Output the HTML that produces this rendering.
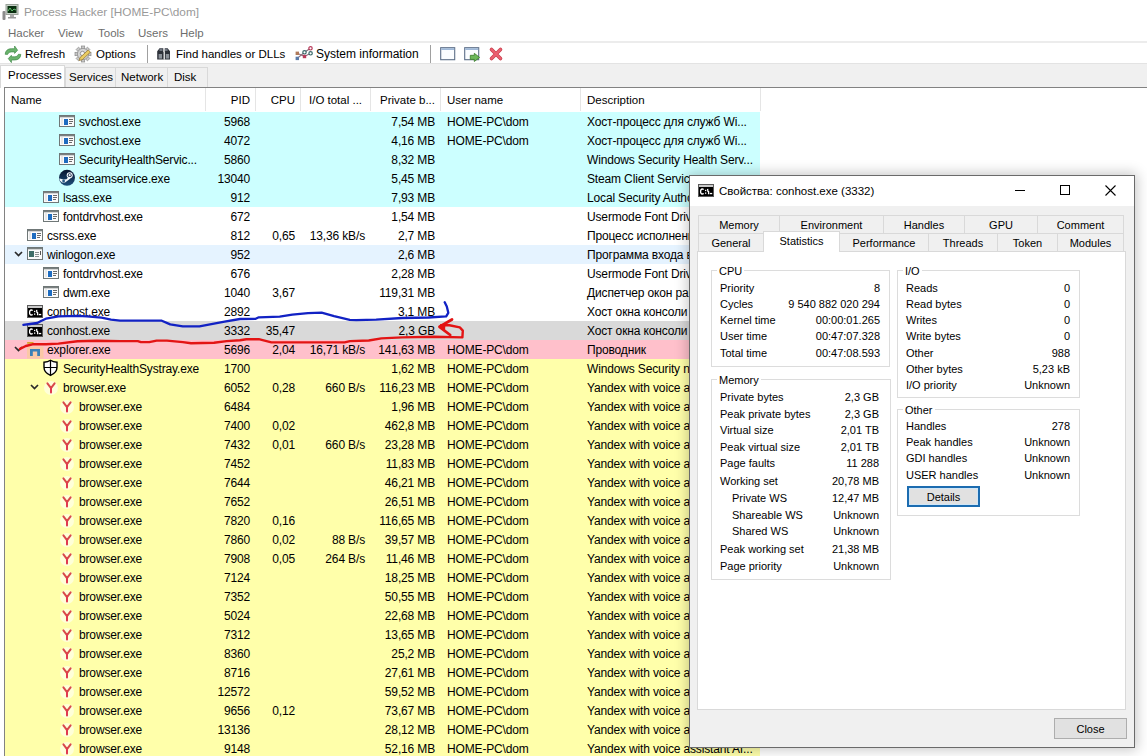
<!DOCTYPE html>
<html><head><meta charset="utf-8"><style>
*{box-sizing:border-box}
html,body{margin:0;padding:0}
body{width:1147px;height:756px;overflow:hidden;position:relative;background:#fff;font-family:"Liberation Sans",sans-serif;font-size:11.5px;color:#000}
.a{position:absolute;white-space:nowrap}
.r{position:absolute;left:5px;width:755px;height:19px}
.t{position:absolute;top:3px;white-space:nowrap;line-height:15px;font-size:12px;letter-spacing:-0.15px}
.rt{text-align:right}
.ic{position:absolute;top:0px;width:17px;height:19px;line-height:0}
.hd{position:absolute;top:88px;height:24px;line-height:24px;white-space:nowrap}
.hdv{position:absolute;top:88px;width:1px;height:23px;background:#e5e5e5}
.dl{position:absolute;white-space:nowrap;font-size:11px;line-height:14px}
</style></head><body>

<svg class="a" style="left:1px;top:3px" width="20" height="17" viewBox="0 0 20 17"><rect x="5" y="1.5" width="12" height="10" fill="#c8d0c8" stroke="#9aa39a"/><rect x="6.5" y="3" width="9" height="7" fill="#0a3010"/><path d="M7 8 L9 5 L11 8 L13 6 L15 7" fill="none" stroke="#6fd07a" stroke-width="0.9"/><rect x="9" y="12" width="4" height="2" fill="#aaa"/><rect x="7" y="14" width="8" height="1.5" fill="#999"/><rect x="1.5" y="8" width="3" height="9" rx="1" fill="#8c8c8c"/></svg>
<div class="a" style="left:24px;top:5px;font-size:11.8px;line-height:15px;color:#999">Process Hacker [HOME-PC\dom]</div>
<div class="a" style="left:8px;top:26px;line-height:15px;color:#6d6d6d">Hacker</div>
<div class="a" style="left:58px;top:26px;line-height:15px;color:#6d6d6d">View</div>
<div class="a" style="left:98px;top:26px;line-height:15px;color:#6d6d6d">Tools</div>
<div class="a" style="left:138px;top:26px;line-height:15px;color:#6d6d6d">Users</div>
<div class="a" style="left:180px;top:26px;line-height:15px;color:#6d6d6d">Help</div>
<div class="a" style="left:0;top:41px;width:1147px;height:2px;background:#ececec"></div>
<svg class="a" style="left:0;top:42px" width="30" height="22" viewBox="0 0 30 22"><path d="M5.2 12.3 C5.4 8.6 7.8 6.7 11.5 6.7 H14.6 V4 L17.6 8.2 L14.6 11.4 V9.9 H11.5 C9.5 9.9 8.3 10.7 7.6 12.4 Z" fill="#6ab36c" stroke="#3f8a48" stroke-width="0.7" stroke-linejoin="round"/><path d="M20.8 12.4 C20.6 16.1 18.2 18 14.5 18 H11.4 V20.6 L8.3 16.6 L11.4 13.3 V14.8 H14.5 C16.5 14.8 17.7 14 18.4 12.3 Z" fill="#6ab36c" stroke="#3f8a48" stroke-width="0.7" stroke-linejoin="round"/></svg>
<div class="a" style="left:25px;top:47px;line-height:15px">Refresh</div>
<svg class="a" style="left:70px;top:42px" width="30" height="22" viewBox="0 0 30 22"><g transform="translate(13 12)"><rect x="-1.7" y="-8" width="3.4" height="3.6" fill="#c8c8c8" stroke="#8a8a8a" stroke-width="0.7" transform="rotate(0)"/><rect x="-1.7" y="-8" width="3.4" height="3.6" fill="#c8c8c8" stroke="#8a8a8a" stroke-width="0.7" transform="rotate(45)"/><rect x="-1.7" y="-8" width="3.4" height="3.6" fill="#c8c8c8" stroke="#8a8a8a" stroke-width="0.7" transform="rotate(90)"/><rect x="-1.7" y="-8" width="3.4" height="3.6" fill="#c8c8c8" stroke="#8a8a8a" stroke-width="0.7" transform="rotate(135)"/><rect x="-1.7" y="-8" width="3.4" height="3.6" fill="#c8c8c8" stroke="#8a8a8a" stroke-width="0.7" transform="rotate(180)"/><rect x="-1.7" y="-8" width="3.4" height="3.6" fill="#c8c8c8" stroke="#8a8a8a" stroke-width="0.7" transform="rotate(225)"/><rect x="-1.7" y="-8" width="3.4" height="3.6" fill="#c8c8c8" stroke="#8a8a8a" stroke-width="0.7" transform="rotate(270)"/><rect x="-1.7" y="-8" width="3.4" height="3.6" fill="#c8c8c8" stroke="#8a8a8a" stroke-width="0.7" transform="rotate(315)"/><circle r="5.6" fill="#d6d6d6" stroke="#8a8a8a" stroke-width="0.7"/><circle r="2.2" cx="-0.5" cy="-0.5" fill="#f4f4f4" stroke="#777" stroke-width="0.7"/></g><path d="M9 18.4 L10 15.6 L18.2 8 L20.4 10.2 L12.2 17.8 Z" fill="#e9cc62" stroke="#8f6e28" stroke-width="0.7"/></svg>
<div class="a" style="left:96px;top:47px;line-height:15px">Options</div>
<div class="a" style="left:147px;top:45px;width:1px;height:18px;background:#a0a0a0"></div>
<svg class="a" style="left:150px;top:42px" width="30" height="22" viewBox="0 0 30 22"><path d="M7.2 17.6 V9.2 L9.6 6.2 H13.3 V10 H14.2 V17.6 Z" fill="#2c3038"/><path d="M20 17.6 V9.2 L17.6 6.2 H14.7 V10 H13.8 V17.6 Z" fill="#2c3038"/><rect x="13.6" y="10" width="1.2" height="7.6" fill="#fff"/><rect x="8.6" y="12" width="3.4" height="4.6" fill="#8a9098"/><rect x="15.8" y="12" width="3.4" height="4.6" fill="#8a9098"/><rect x="9.5" y="6.6" width="3" height="2.4" fill="#707680"/><rect x="15" y="6.6" width="2.6" height="2.4" fill="#707680"/></svg>
<div class="a" style="left:176px;top:47px;line-height:15px">Find handles or DLLs</div>
<svg class="a" style="left:294px;top:46px" width="19" height="15" viewBox="0 0 19 15"><path d="M3.3 12.4 L10.5 6.3 L16.5 2.3" fill="none" stroke="#8a6a7a" stroke-width="1.1"/><path d="M3.3 7.3 L10.5 10.5 L16.6 7.3" fill="none" stroke="#8a6a7a" stroke-width="1.1"/><rect x="1.6" y="5.6" width="3.4" height="3.4" fill="#b07a5a"/><rect x="1.6" y="10.7" width="3.4" height="3.4" fill="#5a7aa8"/><rect x="8.8" y="8.8" width="3.4" height="3.4" fill="#b83a5a"/><circle cx="10.5" cy="6.3" r="1.7" fill="#fff" stroke="#3a6a6a" stroke-width="1.2"/><circle cx="16.6" cy="7.3" r="1.7" fill="#fff" stroke="#3a6a6a" stroke-width="1.2"/><circle cx="16.5" cy="2.3" r="1.7" fill="#fff" stroke="#b83a5a" stroke-width="1.2"/></svg>
<div class="a" style="left:316px;top:47px;line-height:15px;font-size:12px">System information</div>
<div class="a" style="left:430px;top:45px;width:1px;height:18px;background:#a0a0a0"></div>
<svg class="a" style="left:440px;top:47px" width="16" height="14" viewBox="0 0 16 14"><rect x="0.7" y="0.7" width="14" height="12" fill="#fbfdff" stroke="#5d6f88" stroke-width="1.1"/><rect x="1.2" y="1.2" width="13" height="1.8" fill="#9fb8d8"/></svg>
<svg class="a" style="left:464px;top:47px" width="17" height="16" viewBox="0 0 17 16"><rect x="0.7" y="0.7" width="14" height="12" fill="#fbfdff" stroke="#5d6f88" stroke-width="1.1"/><rect x="1.2" y="1.2" width="13" height="1.8" fill="#9fb8d8"/><path d="M6.3 8.3 H10.3 V6.3 L15.6 10.4 L10.3 14.5 V12.4 H6.3 Z" fill="#6cb85a" stroke="#3a7a2a" stroke-width="0.8"/></svg>
<svg class="a" style="left:488px;top:46px" width="16" height="16" viewBox="0 0 16 16"><path d="M3.5 3.5 L12.5 12.5 M12.5 3.5 L3.5 12.5" stroke="#c8404e" stroke-width="3.6" stroke-linecap="round"/><path d="M3.5 3.5 L12.5 12.5 M12.5 3.5 L3.5 12.5" stroke="#ec6070" stroke-width="2.2" stroke-linecap="round"/></svg>
<div class="a" style="left:0;top:63px;width:1147px;height:1px;background:#e3e3e3"></div>
<div class="a" style="left:0;top:64px;width:1147px;height:23px;background:#f0f0f0"></div>
<div class="a" style="left:65px;top:67px;width:143px;height:20px;background:#f0f0f0;border:1px solid #d9d9d9;border-bottom:none"></div>
<div class="a" style="left:115px;top:67px;width:1px;height:20px;background:#d9d9d9"></div>
<div class="a" style="left:167px;top:67px;width:1px;height:20px;background:#d9d9d9"></div>
<div class="a" style="left:0px;top:65px;width:65px;height:23px;background:#fff;border:1px solid #d9d9d9;border-bottom:none"></div>
<div class="a" style="left:8px;top:68px;line-height:15px">Processes</div>
<div class="a" style="left:69px;top:70px;line-height:15px">Services</div>
<div class="a" style="left:121px;top:70px;line-height:15px">Network</div>
<div class="a" style="left:174px;top:70px;line-height:15px">Disk</div>
<div class="a" style="left:4px;top:87px;width:1143px;height:669px;background:#fff;border-top:1px solid #828282;border-left:1px solid #828282"></div>
<div class="hdv" style="left:205px"></div>
<div class="hdv" style="left:255px"></div>
<div class="hdv" style="left:300px"></div>
<div class="hdv" style="left:370px"></div>
<div class="hdv" style="left:440px"></div>
<div class="hdv" style="left:580px"></div>
<div class="hdv" style="left:760px"></div>
<div class="hd" style="left:11px">Name</div>
<div class="hd rt" style="left:205px;width:45px">PID</div>
<div class="hd rt" style="left:255px;width:40px">CPU</div>
<div class="hd" style="left:309px">I/O total ...</div>
<div class="hd" style="left:380px">Private b...</div>
<div class="hd" style="left:447px">User name</div>
<div class="hd" style="left:587px">Description</div>
<div class="r" style="top:112px;background:#ccffff"><div class="ic" style="left:54px"><svg width="16" height="16" viewBox="0 0 16 16"><rect x="0.5" y="3.5" width="15" height="11" fill="#fbfbfb" stroke="#6f7777"/><rect x="1" y="4" width="14" height="1.3" fill="#7a8080"/><rect x="2" y="6" width="2" height="7" fill="#e8e8e8"/><rect x="5" y="7" width="4" height="6" fill="#1e6cc0"/><rect x="10" y="7" width="4" height="1" fill="#6a6a6a"/><rect x="10" y="9" width="4" height="1" fill="#6a6a6a"/><rect x="10" y="11" width="3" height="1" fill="#6a6a6a"/></svg></div><div class="t" style="left:74px">svchost.exe</div><div class="t rt" style="left:0;width:245px">5968</div><div class="t rt" style="left:0;width:430px">7,54 MB</div><div class="t" style="left:442px">HOME-PC\dom</div><div class="t" style="left:582px">Хост-процесс для служб Wi...</div></div>
<div class="r" style="top:131px;background:#ccffff"><div class="ic" style="left:54px"><svg width="16" height="16" viewBox="0 0 16 16"><rect x="0.5" y="3.5" width="15" height="11" fill="#fbfbfb" stroke="#6f7777"/><rect x="1" y="4" width="14" height="1.3" fill="#7a8080"/><rect x="2" y="6" width="2" height="7" fill="#e8e8e8"/><rect x="5" y="7" width="4" height="6" fill="#1e6cc0"/><rect x="10" y="7" width="4" height="1" fill="#6a6a6a"/><rect x="10" y="9" width="4" height="1" fill="#6a6a6a"/><rect x="10" y="11" width="3" height="1" fill="#6a6a6a"/></svg></div><div class="t" style="left:74px">svchost.exe</div><div class="t rt" style="left:0;width:245px">4072</div><div class="t rt" style="left:0;width:430px">4,16 MB</div><div class="t" style="left:442px">HOME-PC\dom</div><div class="t" style="left:582px">Хост-процесс для служб Wi...</div></div>
<div class="r" style="top:150px;background:#ccffff"><div class="ic" style="left:54px"><svg width="16" height="16" viewBox="0 0 16 16"><rect x="0.5" y="3.5" width="15" height="11" fill="#fbfbfb" stroke="#6f7777"/><rect x="1" y="4" width="14" height="1.3" fill="#7a8080"/><rect x="2" y="6" width="2" height="7" fill="#e8e8e8"/><rect x="5" y="7" width="4" height="6" fill="#1e6cc0"/><rect x="10" y="7" width="4" height="1" fill="#6a6a6a"/><rect x="10" y="9" width="4" height="1" fill="#6a6a6a"/><rect x="10" y="11" width="3" height="1" fill="#6a6a6a"/></svg></div><div class="t" style="left:74px">SecurityHealthServic...</div><div class="t rt" style="left:0;width:245px">5860</div><div class="t rt" style="left:0;width:430px">8,32 MB</div><div class="t" style="left:582px">Windows Security Health Serv...</div></div>
<div class="r" style="top:169px;background:#ccffff"><div class="ic" style="left:54px"><svg width="16" height="18" viewBox="0 0 16 18"><defs><linearGradient id="stg" x1="0" y1="0" x2="0" y2="1"><stop offset="0" stop-color="#08142e"/><stop offset="1" stop-color="#1d4f7c"/></linearGradient></defs><circle cx="8" cy="8.8" r="8" fill="url(#stg)"/><path d="M0.4 9.6 L4.6 10.6 L7.4 10.2 L9.8 7.8 L11.6 9.2 L8.8 11.6 L6 13.6 L3 13.6 L1 11.8 Z" fill="#f4f8fc"/><circle cx="4.6" cy="11.9" r="1.4" fill="#2a5a85"/><circle cx="10.7" cy="6.2" r="3" fill="#f4f8fc"/><circle cx="10.7" cy="6.2" r="1.9" fill="#1a2a48"/><circle cx="10.7" cy="6.2" r="1.1" fill="#e8eef6"/></svg></div><div class="t" style="left:74px">steamservice.exe</div><div class="t rt" style="left:0;width:245px">13040</div><div class="t rt" style="left:0;width:430px">5,45 MB</div><div class="t" style="left:582px">Steam Client Service</div></div>
<div class="r" style="top:188px;background:#ccffff"><div class="ic" style="left:38px"><svg width="16" height="16" viewBox="0 0 16 16"><rect x="0.5" y="3.5" width="15" height="11" fill="#fbfbfb" stroke="#6f7777"/><rect x="1" y="4" width="14" height="1.3" fill="#7a8080"/><rect x="2" y="6" width="2" height="7" fill="#e8e8e8"/><rect x="5" y="7" width="4" height="6" fill="#1e6cc0"/><rect x="10" y="7" width="4" height="1" fill="#6a6a6a"/><rect x="10" y="9" width="4" height="1" fill="#6a6a6a"/><rect x="10" y="11" width="3" height="1" fill="#6a6a6a"/></svg></div><div class="t" style="left:58px">lsass.exe</div><div class="t rt" style="left:0;width:245px">912</div><div class="t rt" style="left:0;width:430px">7,93 MB</div><div class="t" style="left:582px">Local Security Authority Process</div></div>
<div class="r" style="top:207px;background:#ffffff"><div class="ic" style="left:38px"><svg width="16" height="16" viewBox="0 0 16 16"><rect x="0.5" y="3.5" width="15" height="11" fill="#fbfbfb" stroke="#6f7777"/><rect x="1" y="4" width="14" height="1.3" fill="#7a8080"/><rect x="2" y="6" width="2" height="7" fill="#e8e8e8"/><rect x="5" y="7" width="4" height="6" fill="#1e6cc0"/><rect x="10" y="7" width="4" height="1" fill="#6a6a6a"/><rect x="10" y="9" width="4" height="1" fill="#6a6a6a"/><rect x="10" y="11" width="3" height="1" fill="#6a6a6a"/></svg></div><div class="t" style="left:58px">fontdrvhost.exe</div><div class="t rt" style="left:0;width:245px">672</div><div class="t rt" style="left:0;width:430px">1,54 MB</div><div class="t" style="left:582px">Usermode Font Driver Host</div></div>
<div class="r" style="top:226px;background:#ffffff"><div class="ic" style="left:22px"><svg width="16" height="16" viewBox="0 0 16 16"><rect x="0.5" y="3.5" width="15" height="11" fill="#fbfbfb" stroke="#6f7777"/><rect x="1" y="4" width="14" height="1.3" fill="#7a8080"/><rect x="2" y="6" width="2" height="7" fill="#e8e8e8"/><rect x="5" y="7" width="4" height="6" fill="#1e6cc0"/><rect x="10" y="7" width="4" height="1" fill="#6a6a6a"/><rect x="10" y="9" width="4" height="1" fill="#6a6a6a"/><rect x="10" y="11" width="3" height="1" fill="#6a6a6a"/></svg></div><div class="t" style="left:42px">csrss.exe</div><div class="t rt" style="left:0;width:245px">812</div><div class="t rt" style="left:0;width:290px">0,65</div><div class="t rt" style="left:0;width:360px">13,36 kB/s</div><div class="t rt" style="left:0;width:430px">2,7 MB</div><div class="t" style="left:582px">Процесс исполнения клиент-сервер</div></div>
<div class="r" style="top:245px;background:#e5f3ff"><div class="a" style="left:9px;top:5px;line-height:0"><svg width="10" height="8" viewBox="0 0 10 8"><path d="M1 2 L4.5 5.5 L8 2" fill="none" stroke="#2a2a2a" stroke-width="1.7"/></svg></div><div class="ic" style="left:22px"><svg width="16" height="16" viewBox="0 0 16 16"><rect x="0.5" y="2.5" width="15" height="12" fill="#fbfbfb" stroke="#6f7777"/><rect x="1" y="3" width="14" height="1.3" fill="#7a8080"/><rect x="2" y="6" width="5" height="6" fill="#3f6e68"/><rect x="8" y="7" width="4" height="1" fill="#8a9090"/><rect x="8" y="9" width="4" height="1" fill="#8a9090"/><rect x="8" y="11" width="4" height="1" fill="#8a9090"/><rect x="13" y="6" width="1" height="4" fill="#555"/></svg></div><div class="t" style="left:42px">winlogon.exe</div><div class="t rt" style="left:0;width:245px">952</div><div class="t rt" style="left:0;width:430px">2,6 MB</div><div class="t" style="left:582px">Программа входа в систему</div></div>
<div class="r" style="top:264px;background:#ffffff"><div class="ic" style="left:38px"><svg width="16" height="16" viewBox="0 0 16 16"><rect x="0.5" y="3.5" width="15" height="11" fill="#fbfbfb" stroke="#6f7777"/><rect x="1" y="4" width="14" height="1.3" fill="#7a8080"/><rect x="2" y="6" width="2" height="7" fill="#e8e8e8"/><rect x="5" y="7" width="4" height="6" fill="#1e6cc0"/><rect x="10" y="7" width="4" height="1" fill="#6a6a6a"/><rect x="10" y="9" width="4" height="1" fill="#6a6a6a"/><rect x="10" y="11" width="3" height="1" fill="#6a6a6a"/></svg></div><div class="t" style="left:58px">fontdrvhost.exe</div><div class="t rt" style="left:0;width:245px">676</div><div class="t rt" style="left:0;width:430px">2,28 MB</div><div class="t" style="left:582px">Usermode Font Driver Host</div></div>
<div class="r" style="top:283px;background:#ffffff"><div class="ic" style="left:38px"><svg width="16" height="16" viewBox="0 0 16 16"><rect x="0.5" y="3.5" width="15" height="11" fill="#fbfbfb" stroke="#6f7777"/><rect x="1" y="4" width="14" height="1.3" fill="#7a8080"/><rect x="2" y="6" width="2" height="7" fill="#e8e8e8"/><rect x="5" y="7" width="4" height="6" fill="#1e6cc0"/><rect x="10" y="7" width="4" height="1" fill="#6a6a6a"/><rect x="10" y="9" width="4" height="1" fill="#6a6a6a"/><rect x="10" y="11" width="3" height="1" fill="#6a6a6a"/></svg></div><div class="t" style="left:58px">dwm.exe</div><div class="t rt" style="left:0;width:245px">1040</div><div class="t rt" style="left:0;width:290px">3,67</div><div class="t rt" style="left:0;width:430px">119,31 MB</div><div class="t" style="left:582px">Диспетчер окон рабочего стола</div></div>
<div class="r" style="top:302px;background:#ffffff"><div class="ic" style="left:22px"><svg width="16" height="16" viewBox="0 0 16 16"><g transform="translate(0 3)"><rect x="0.5" y="0.5" width="15" height="12" fill="#000" stroke="#5a5a5a"/><rect x="1" y="1" width="14" height="2" fill="#c9c9c9"/><path d="M5.6 5.6 Q5.2 5 4.2 5 Q2.6 5 2.6 7.5 Q2.6 10 4.2 10 Q5.2 10 5.6 9.4" fill="none" stroke="#fff" stroke-width="1.3"/><rect x="7" y="5.8" width="1.3" height="1.3" fill="#fff"/><rect x="7" y="8.5" width="1.3" height="1.3" fill="#fff"/><path d="M9.6 4.8 L9.9 7.3 L10.6 7.6 V10.2" fill="none" stroke="#fff" stroke-width="1.3"/><rect x="11.8" y="8.9" width="2.4" height="1.3" fill="#fff"/></g></svg></div><div class="t" style="left:42px">conhost.exe</div><div class="t rt" style="left:0;width:245px">2892</div><div class="t rt" style="left:0;width:430px">3,1 MB</div><div class="t" style="left:582px">Хост окна консоли</div></div>
<div class="r" style="top:321px;background:#d9d9d9"><div class="ic" style="left:22px"><svg width="16" height="16" viewBox="0 0 16 16"><g transform="translate(0 3)"><rect x="0.5" y="0.5" width="15" height="12" fill="#000" stroke="#5a5a5a"/><rect x="1" y="1" width="14" height="2" fill="#c9c9c9"/><path d="M5.6 5.6 Q5.2 5 4.2 5 Q2.6 5 2.6 7.5 Q2.6 10 4.2 10 Q5.2 10 5.6 9.4" fill="none" stroke="#fff" stroke-width="1.3"/><rect x="7" y="5.8" width="1.3" height="1.3" fill="#fff"/><rect x="7" y="8.5" width="1.3" height="1.3" fill="#fff"/><path d="M9.6 4.8 L9.9 7.3 L10.6 7.6 V10.2" fill="none" stroke="#fff" stroke-width="1.3"/><rect x="11.8" y="8.9" width="2.4" height="1.3" fill="#fff"/></g></svg></div><div class="t" style="left:42px">conhost.exe</div><div class="t rt" style="left:0;width:245px">3332</div><div class="t rt" style="left:0;width:290px">35,47</div><div class="t rt" style="left:0;width:430px">2,3 GB</div><div class="t" style="left:582px">Хост окна консоли</div></div>
<div class="r" style="top:340px;background:#ffc0cb"><div class="a" style="left:9px;top:5px;line-height:0"><svg width="10" height="8" viewBox="0 0 10 8"><path d="M1 2 L4.5 5.5 L8 2" fill="none" stroke="#2a2a2a" stroke-width="1.7"/></svg></div><div class="ic" style="left:22px"><svg width="17" height="19" viewBox="0 0 17 19"><rect x="0" y="6.5" width="16.5" height="12" fill="#f6d27a" opacity="0.45"/><rect x="0.2" y="2" width="6.3" height="1.8" fill="#d9a428"/><path d="M3 16 V9 H13 V16 H10.2 V11.6 H5.8 V16 Z" fill="#3a80b8"/></svg></div><div class="t" style="left:42px">explorer.exe</div><div class="t rt" style="left:0;width:245px">5696</div><div class="t rt" style="left:0;width:290px">2,04</div><div class="t rt" style="left:0;width:360px">16,71 kB/s</div><div class="t rt" style="left:0;width:430px">141,63 MB</div><div class="t" style="left:442px">HOME-PC\dom</div><div class="t" style="left:582px">Проводник</div></div>
<div class="r" style="top:359px;background:#ffffaa"><div class="ic" style="left:38px"><svg width="16" height="18" viewBox="0 0 16 18"><path d="M7.5 1.3 C5.8 2.5 3.6 3.1 1 3.2 V8.2 C1 11.8 4 14.8 7.5 16.4 C11 14.8 14 11.8 14 8.2 V3.2 C11.4 3.1 9.2 2.5 7.5 1.3 Z" fill="#fcfcfc" stroke="#000" stroke-width="1.4"/><path d="M7.5 1.5 V16.2 M1 8.5 H14" stroke="#000" stroke-width="1.2"/></svg></div><div class="t" style="left:58px">SecurityHealthSystray.exe</div><div class="t rt" style="left:0;width:245px">1700</div><div class="t rt" style="left:0;width:430px">1,62 MB</div><div class="t" style="left:442px">HOME-PC\dom</div><div class="t" style="left:582px">Windows Security notification icon</div></div>
<div class="r" style="top:378px;background:#ffffaa"><div class="a" style="left:25px;top:5px;line-height:0"><svg width="10" height="8" viewBox="0 0 10 8"><path d="M1 2 L4.5 5.5 L8 2" fill="none" stroke="#2a2a2a" stroke-width="1.7"/></svg></div><div class="ic" style="left:38px"><svg width="16" height="18" viewBox="0 0 16 18"><circle cx="8" cy="10" r="7" fill="#fff" opacity="0.55"/><path d="M4.4 5.4 L8 10.2 M11.6 5.4 L8 10.2" fill="none" stroke="#d84a4a" stroke-width="2" stroke-linecap="round"/><path d="M8 10 V14.6" fill="none" stroke="#e03a50" stroke-width="2" stroke-linecap="round"/></svg></div><div class="t" style="left:58px">browser.exe</div><div class="t rt" style="left:0;width:245px">6052</div><div class="t rt" style="left:0;width:290px">0,28</div><div class="t rt" style="left:0;width:360px">660 B/s</div><div class="t rt" style="left:0;width:430px">116,23 MB</div><div class="t" style="left:442px">HOME-PC\dom</div><div class="t" style="left:582px">Yandex with voice assistant AI...</div></div>
<div class="r" style="top:397px;background:#ffffaa"><div class="ic" style="left:54px"><svg width="16" height="18" viewBox="0 0 16 18"><circle cx="8" cy="10" r="7" fill="#fff" opacity="0.55"/><path d="M4.4 5.4 L8 10.2 M11.6 5.4 L8 10.2" fill="none" stroke="#d84a4a" stroke-width="2" stroke-linecap="round"/><path d="M8 10 V14.6" fill="none" stroke="#e03a50" stroke-width="2" stroke-linecap="round"/></svg></div><div class="t" style="left:74px">browser.exe</div><div class="t rt" style="left:0;width:245px">6484</div><div class="t rt" style="left:0;width:430px">1,96 MB</div><div class="t" style="left:442px">HOME-PC\dom</div><div class="t" style="left:582px">Yandex with voice assistant AI...</div></div>
<div class="r" style="top:416px;background:#ffffaa"><div class="ic" style="left:54px"><svg width="16" height="18" viewBox="0 0 16 18"><circle cx="8" cy="10" r="7" fill="#fff" opacity="0.55"/><path d="M4.4 5.4 L8 10.2 M11.6 5.4 L8 10.2" fill="none" stroke="#d84a4a" stroke-width="2" stroke-linecap="round"/><path d="M8 10 V14.6" fill="none" stroke="#e03a50" stroke-width="2" stroke-linecap="round"/></svg></div><div class="t" style="left:74px">browser.exe</div><div class="t rt" style="left:0;width:245px">7400</div><div class="t rt" style="left:0;width:290px">0,02</div><div class="t rt" style="left:0;width:430px">462,8 MB</div><div class="t" style="left:442px">HOME-PC\dom</div><div class="t" style="left:582px">Yandex with voice assistant AI...</div></div>
<div class="r" style="top:435px;background:#ffffaa"><div class="ic" style="left:54px"><svg width="16" height="18" viewBox="0 0 16 18"><circle cx="8" cy="10" r="7" fill="#fff" opacity="0.55"/><path d="M4.4 5.4 L8 10.2 M11.6 5.4 L8 10.2" fill="none" stroke="#d84a4a" stroke-width="2" stroke-linecap="round"/><path d="M8 10 V14.6" fill="none" stroke="#e03a50" stroke-width="2" stroke-linecap="round"/></svg></div><div class="t" style="left:74px">browser.exe</div><div class="t rt" style="left:0;width:245px">7432</div><div class="t rt" style="left:0;width:290px">0,01</div><div class="t rt" style="left:0;width:360px">660 B/s</div><div class="t rt" style="left:0;width:430px">23,28 MB</div><div class="t" style="left:442px">HOME-PC\dom</div><div class="t" style="left:582px">Yandex with voice assistant AI...</div></div>
<div class="r" style="top:454px;background:#ffffaa"><div class="ic" style="left:54px"><svg width="16" height="18" viewBox="0 0 16 18"><circle cx="8" cy="10" r="7" fill="#fff" opacity="0.55"/><path d="M4.4 5.4 L8 10.2 M11.6 5.4 L8 10.2" fill="none" stroke="#d84a4a" stroke-width="2" stroke-linecap="round"/><path d="M8 10 V14.6" fill="none" stroke="#e03a50" stroke-width="2" stroke-linecap="round"/></svg></div><div class="t" style="left:74px">browser.exe</div><div class="t rt" style="left:0;width:245px">7452</div><div class="t rt" style="left:0;width:430px">11,83 MB</div><div class="t" style="left:442px">HOME-PC\dom</div><div class="t" style="left:582px">Yandex with voice assistant AI...</div></div>
<div class="r" style="top:473px;background:#ffffaa"><div class="ic" style="left:54px"><svg width="16" height="18" viewBox="0 0 16 18"><circle cx="8" cy="10" r="7" fill="#fff" opacity="0.55"/><path d="M4.4 5.4 L8 10.2 M11.6 5.4 L8 10.2" fill="none" stroke="#d84a4a" stroke-width="2" stroke-linecap="round"/><path d="M8 10 V14.6" fill="none" stroke="#e03a50" stroke-width="2" stroke-linecap="round"/></svg></div><div class="t" style="left:74px">browser.exe</div><div class="t rt" style="left:0;width:245px">7644</div><div class="t rt" style="left:0;width:430px">46,21 MB</div><div class="t" style="left:442px">HOME-PC\dom</div><div class="t" style="left:582px">Yandex with voice assistant AI...</div></div>
<div class="r" style="top:492px;background:#ffffaa"><div class="ic" style="left:54px"><svg width="16" height="18" viewBox="0 0 16 18"><circle cx="8" cy="10" r="7" fill="#fff" opacity="0.55"/><path d="M4.4 5.4 L8 10.2 M11.6 5.4 L8 10.2" fill="none" stroke="#d84a4a" stroke-width="2" stroke-linecap="round"/><path d="M8 10 V14.6" fill="none" stroke="#e03a50" stroke-width="2" stroke-linecap="round"/></svg></div><div class="t" style="left:74px">browser.exe</div><div class="t rt" style="left:0;width:245px">7652</div><div class="t rt" style="left:0;width:430px">26,51 MB</div><div class="t" style="left:442px">HOME-PC\dom</div><div class="t" style="left:582px">Yandex with voice assistant AI...</div></div>
<div class="r" style="top:511px;background:#ffffaa"><div class="ic" style="left:54px"><svg width="16" height="18" viewBox="0 0 16 18"><circle cx="8" cy="10" r="7" fill="#fff" opacity="0.55"/><path d="M4.4 5.4 L8 10.2 M11.6 5.4 L8 10.2" fill="none" stroke="#d84a4a" stroke-width="2" stroke-linecap="round"/><path d="M8 10 V14.6" fill="none" stroke="#e03a50" stroke-width="2" stroke-linecap="round"/></svg></div><div class="t" style="left:74px">browser.exe</div><div class="t rt" style="left:0;width:245px">7820</div><div class="t rt" style="left:0;width:290px">0,16</div><div class="t rt" style="left:0;width:430px">116,65 MB</div><div class="t" style="left:442px">HOME-PC\dom</div><div class="t" style="left:582px">Yandex with voice assistant AI...</div></div>
<div class="r" style="top:530px;background:#ffffaa"><div class="ic" style="left:54px"><svg width="16" height="18" viewBox="0 0 16 18"><circle cx="8" cy="10" r="7" fill="#fff" opacity="0.55"/><path d="M4.4 5.4 L8 10.2 M11.6 5.4 L8 10.2" fill="none" stroke="#d84a4a" stroke-width="2" stroke-linecap="round"/><path d="M8 10 V14.6" fill="none" stroke="#e03a50" stroke-width="2" stroke-linecap="round"/></svg></div><div class="t" style="left:74px">browser.exe</div><div class="t rt" style="left:0;width:245px">7860</div><div class="t rt" style="left:0;width:290px">0,02</div><div class="t rt" style="left:0;width:360px">88 B/s</div><div class="t rt" style="left:0;width:430px">39,57 MB</div><div class="t" style="left:442px">HOME-PC\dom</div><div class="t" style="left:582px">Yandex with voice assistant AI...</div></div>
<div class="r" style="top:549px;background:#ffffaa"><div class="ic" style="left:54px"><svg width="16" height="18" viewBox="0 0 16 18"><circle cx="8" cy="10" r="7" fill="#fff" opacity="0.55"/><path d="M4.4 5.4 L8 10.2 M11.6 5.4 L8 10.2" fill="none" stroke="#d84a4a" stroke-width="2" stroke-linecap="round"/><path d="M8 10 V14.6" fill="none" stroke="#e03a50" stroke-width="2" stroke-linecap="round"/></svg></div><div class="t" style="left:74px">browser.exe</div><div class="t rt" style="left:0;width:245px">7908</div><div class="t rt" style="left:0;width:290px">0,05</div><div class="t rt" style="left:0;width:360px">264 B/s</div><div class="t rt" style="left:0;width:430px">11,46 MB</div><div class="t" style="left:442px">HOME-PC\dom</div><div class="t" style="left:582px">Yandex with voice assistant AI...</div></div>
<div class="r" style="top:568px;background:#ffffaa"><div class="ic" style="left:54px"><svg width="16" height="18" viewBox="0 0 16 18"><circle cx="8" cy="10" r="7" fill="#fff" opacity="0.55"/><path d="M4.4 5.4 L8 10.2 M11.6 5.4 L8 10.2" fill="none" stroke="#d84a4a" stroke-width="2" stroke-linecap="round"/><path d="M8 10 V14.6" fill="none" stroke="#e03a50" stroke-width="2" stroke-linecap="round"/></svg></div><div class="t" style="left:74px">browser.exe</div><div class="t rt" style="left:0;width:245px">7124</div><div class="t rt" style="left:0;width:430px">18,25 MB</div><div class="t" style="left:442px">HOME-PC\dom</div><div class="t" style="left:582px">Yandex with voice assistant AI...</div></div>
<div class="r" style="top:587px;background:#ffffaa"><div class="ic" style="left:54px"><svg width="16" height="18" viewBox="0 0 16 18"><circle cx="8" cy="10" r="7" fill="#fff" opacity="0.55"/><path d="M4.4 5.4 L8 10.2 M11.6 5.4 L8 10.2" fill="none" stroke="#d84a4a" stroke-width="2" stroke-linecap="round"/><path d="M8 10 V14.6" fill="none" stroke="#e03a50" stroke-width="2" stroke-linecap="round"/></svg></div><div class="t" style="left:74px">browser.exe</div><div class="t rt" style="left:0;width:245px">7352</div><div class="t rt" style="left:0;width:430px">50,55 MB</div><div class="t" style="left:442px">HOME-PC\dom</div><div class="t" style="left:582px">Yandex with voice assistant AI...</div></div>
<div class="r" style="top:606px;background:#ffffaa"><div class="ic" style="left:54px"><svg width="16" height="18" viewBox="0 0 16 18"><circle cx="8" cy="10" r="7" fill="#fff" opacity="0.55"/><path d="M4.4 5.4 L8 10.2 M11.6 5.4 L8 10.2" fill="none" stroke="#d84a4a" stroke-width="2" stroke-linecap="round"/><path d="M8 10 V14.6" fill="none" stroke="#e03a50" stroke-width="2" stroke-linecap="round"/></svg></div><div class="t" style="left:74px">browser.exe</div><div class="t rt" style="left:0;width:245px">5024</div><div class="t rt" style="left:0;width:430px">22,68 MB</div><div class="t" style="left:442px">HOME-PC\dom</div><div class="t" style="left:582px">Yandex with voice assistant AI...</div></div>
<div class="r" style="top:625px;background:#ffffaa"><div class="ic" style="left:54px"><svg width="16" height="18" viewBox="0 0 16 18"><circle cx="8" cy="10" r="7" fill="#fff" opacity="0.55"/><path d="M4.4 5.4 L8 10.2 M11.6 5.4 L8 10.2" fill="none" stroke="#d84a4a" stroke-width="2" stroke-linecap="round"/><path d="M8 10 V14.6" fill="none" stroke="#e03a50" stroke-width="2" stroke-linecap="round"/></svg></div><div class="t" style="left:74px">browser.exe</div><div class="t rt" style="left:0;width:245px">7312</div><div class="t rt" style="left:0;width:430px">13,65 MB</div><div class="t" style="left:442px">HOME-PC\dom</div><div class="t" style="left:582px">Yandex with voice assistant AI...</div></div>
<div class="r" style="top:644px;background:#ffffaa"><div class="ic" style="left:54px"><svg width="16" height="18" viewBox="0 0 16 18"><circle cx="8" cy="10" r="7" fill="#fff" opacity="0.55"/><path d="M4.4 5.4 L8 10.2 M11.6 5.4 L8 10.2" fill="none" stroke="#d84a4a" stroke-width="2" stroke-linecap="round"/><path d="M8 10 V14.6" fill="none" stroke="#e03a50" stroke-width="2" stroke-linecap="round"/></svg></div><div class="t" style="left:74px">browser.exe</div><div class="t rt" style="left:0;width:245px">8360</div><div class="t rt" style="left:0;width:430px">25,2 MB</div><div class="t" style="left:442px">HOME-PC\dom</div><div class="t" style="left:582px">Yandex with voice assistant AI...</div></div>
<div class="r" style="top:663px;background:#ffffaa"><div class="ic" style="left:54px"><svg width="16" height="18" viewBox="0 0 16 18"><circle cx="8" cy="10" r="7" fill="#fff" opacity="0.55"/><path d="M4.4 5.4 L8 10.2 M11.6 5.4 L8 10.2" fill="none" stroke="#d84a4a" stroke-width="2" stroke-linecap="round"/><path d="M8 10 V14.6" fill="none" stroke="#e03a50" stroke-width="2" stroke-linecap="round"/></svg></div><div class="t" style="left:74px">browser.exe</div><div class="t rt" style="left:0;width:245px">8716</div><div class="t rt" style="left:0;width:430px">27,61 MB</div><div class="t" style="left:442px">HOME-PC\dom</div><div class="t" style="left:582px">Yandex with voice assistant AI...</div></div>
<div class="r" style="top:682px;background:#ffffaa"><div class="ic" style="left:54px"><svg width="16" height="18" viewBox="0 0 16 18"><circle cx="8" cy="10" r="7" fill="#fff" opacity="0.55"/><path d="M4.4 5.4 L8 10.2 M11.6 5.4 L8 10.2" fill="none" stroke="#d84a4a" stroke-width="2" stroke-linecap="round"/><path d="M8 10 V14.6" fill="none" stroke="#e03a50" stroke-width="2" stroke-linecap="round"/></svg></div><div class="t" style="left:74px">browser.exe</div><div class="t rt" style="left:0;width:245px">12572</div><div class="t rt" style="left:0;width:430px">59,52 MB</div><div class="t" style="left:442px">HOME-PC\dom</div><div class="t" style="left:582px">Yandex with voice assistant AI...</div></div>
<div class="r" style="top:701px;background:#ffffaa"><div class="ic" style="left:54px"><svg width="16" height="18" viewBox="0 0 16 18"><circle cx="8" cy="10" r="7" fill="#fff" opacity="0.55"/><path d="M4.4 5.4 L8 10.2 M11.6 5.4 L8 10.2" fill="none" stroke="#d84a4a" stroke-width="2" stroke-linecap="round"/><path d="M8 10 V14.6" fill="none" stroke="#e03a50" stroke-width="2" stroke-linecap="round"/></svg></div><div class="t" style="left:74px">browser.exe</div><div class="t rt" style="left:0;width:245px">9656</div><div class="t rt" style="left:0;width:290px">0,12</div><div class="t rt" style="left:0;width:430px">73,67 MB</div><div class="t" style="left:442px">HOME-PC\dom</div><div class="t" style="left:582px">Yandex with voice assistant AI...</div></div>
<div class="r" style="top:720px;background:#ffffaa"><div class="ic" style="left:54px"><svg width="16" height="18" viewBox="0 0 16 18"><circle cx="8" cy="10" r="7" fill="#fff" opacity="0.55"/><path d="M4.4 5.4 L8 10.2 M11.6 5.4 L8 10.2" fill="none" stroke="#d84a4a" stroke-width="2" stroke-linecap="round"/><path d="M8 10 V14.6" fill="none" stroke="#e03a50" stroke-width="2" stroke-linecap="round"/></svg></div><div class="t" style="left:74px">browser.exe</div><div class="t rt" style="left:0;width:245px">13136</div><div class="t rt" style="left:0;width:430px">28,12 MB</div><div class="t" style="left:442px">HOME-PC\dom</div><div class="t" style="left:582px">Yandex with voice assistant AI...</div></div>
<div class="r" style="top:739px;background:#ffffaa"><div class="ic" style="left:54px"><svg width="16" height="18" viewBox="0 0 16 18"><circle cx="8" cy="10" r="7" fill="#fff" opacity="0.55"/><path d="M4.4 5.4 L8 10.2 M11.6 5.4 L8 10.2" fill="none" stroke="#d84a4a" stroke-width="2" stroke-linecap="round"/><path d="M8 10 V14.6" fill="none" stroke="#e03a50" stroke-width="2" stroke-linecap="round"/></svg></div><div class="t" style="left:74px">browser.exe</div><div class="t rt" style="left:0;width:245px">9148</div><div class="t rt" style="left:0;width:430px">52,16 MB</div><div class="t" style="left:442px">HOME-PC\dom</div><div class="t" style="left:582px">Yandex with voice assistant AI...</div></div>
<svg class="a" style="left:0;top:0" width="1147" height="756"><polyline points="23.4,324.9 30.0,324.0 37.3,323.0 41.0,321.0 45.9,318.7 58.4,316.3 77.5,315.8 87.0,316.3 101.5,317.7 111.0,319.7 120.0,320.6 161.8,320.7 170.2,324.4 182.8,326.4 199.5,326.4 224.6,321.7 240.0,319.0 255.7,318.8 258.8,317.3 279.7,316.7 292.3,314.6 308.0,313.1 321.6,312.6 334.1,316.2 349.8,319.8 356.3,320.1 376.2,319.6 402.3,318.0 428.5,317.5 446.2,316.4 448.3,312.8 446.8,306.5 444.7,302.3" fill="none" stroke="#1222c4" stroke-width="2.3" stroke-linecap="round" stroke-linejoin="round"/><polyline points="20.0,348.9 25.8,346.0 32.5,344.3 46.0,344.2 58.4,343.6 77.5,341.2 96.7,340.7 120.0,341.1 137.8,341.1 140.9,342.1 149.3,342.1 156.6,340.6 167.0,340.6 182.8,342.1 191.1,343.2 214.0,342.7 226.7,341.1 240.0,340.2 246.3,339.2 258.8,339.2 271.4,342.4 344.6,342.4 350.0,341.1 368.8,340.5 381.4,338.4 402.3,337.4 433.7,336.8 462.4,337.4 462.8,330.6 459.8,327.4 449.4,325.3 441.0,325.3" fill="none" stroke="#e31414" stroke-width="2.4" stroke-linecap="round" stroke-linejoin="round"/><polyline points="452,319.5 439.5,326.8 450.2,335" fill="none" stroke="#e31414" stroke-width="2.8" stroke-linecap="round" stroke-linejoin="round"/><polygon points="438.6,327 445.5,322.8 445,331.2" fill="#e31414"/></svg>
<div class="a" style="left:689px;top:175px;width:446px;height:573px;box-shadow:0 0 12px 2px rgba(0,0,0,0.22)"></div>
<div class="a" style="left:689px;top:175px;width:446px;height:573px;background:#f0f0f0;border:1px solid #6a6a6a"></div>
<div class="a" style="left:690px;top:176px;width:444px;height:30px;background:#fff"></div>
<svg class="a" style="left:698px;top:184px" width="16" height="13" viewBox="0 0 16 13"><rect x="0.5" y="0.5" width="15" height="12" fill="#000" stroke="#5a5a5a"/><rect x="1" y="1" width="14" height="2" fill="#c9c9c9"/><path d="M5.6 5.6 Q5.2 5 4.2 5 Q2.6 5 2.6 7.5 Q2.6 10 4.2 10 Q5.2 10 5.6 9.4" fill="none" stroke="#fff" stroke-width="1.3"/><rect x="7" y="5.8" width="1.3" height="1.3" fill="#fff"/><rect x="7" y="8.5" width="1.3" height="1.3" fill="#fff"/><path d="M9.6 4.8 L9.9 7.3 L10.6 7.6 V10.2" fill="none" stroke="#fff" stroke-width="1.3"/><rect x="11.8" y="8.9" width="2.4" height="1.3" fill="#fff"/></svg>
<div class="a" style="left:719px;top:184px;font-size:11.5px;line-height:15px">Свойства: conhost.exe (3332)</div>
<div class="a" style="left:1015px;top:190px;width:10px;height:1px;background:#000"></div>
<div class="a" style="left:1060px;top:185px;width:10px;height:10px;border:1px solid #000"></div>
<svg class="a" style="left:1105px;top:185px" width="11" height="11" viewBox="0 0 11 11"><path d="M0.5 0.5 L10.5 10.5 M10.5 0.5 L0.5 10.5" stroke="#000" stroke-width="1.1"/></svg>
<div class="a" style="left:698px;top:215px;width:82px;height:19px;border:1px solid #d9d9d9;background:#f0f0f0;text-align:center;line-height:19px;font-size:11px">Memory</div>
<div class="a" style="left:779px;top:215px;width:105px;height:19px;border:1px solid #d9d9d9;background:#f0f0f0;text-align:center;line-height:19px;font-size:11px">Environment</div>
<div class="a" style="left:883px;top:215px;width:82px;height:19px;border:1px solid #d9d9d9;background:#f0f0f0;text-align:center;line-height:19px;font-size:11px">Handles</div>
<div class="a" style="left:964px;top:215px;width:74px;height:19px;border:1px solid #d9d9d9;background:#f0f0f0;text-align:center;line-height:19px;font-size:11px">GPU</div>
<div class="a" style="left:1037px;top:215px;width:87px;height:19px;border:1px solid #d9d9d9;background:#f0f0f0;text-align:center;line-height:19px;font-size:11px">Comment</div>
<div class="a" style="left:697px;top:251px;width:429px;height:459px;background:#fff;border:1px solid #d9d9d9"></div>
<div class="a" style="left:698px;top:233px;width:66px;height:19px;border:1px solid #d9d9d9;background:#f0f0f0;text-align:center;line-height:18px;font-size:11px">General</div>
<div class="a" style="left:763px;top:231px;width:77px;height:21px;border:1px solid #d9d9d9;border-bottom:none;background:#fff;text-align:center;line-height:19px;font-size:11px">Statistics</div>
<div class="a" style="left:839px;top:233px;width:90px;height:19px;border:1px solid #d9d9d9;background:#f0f0f0;text-align:center;line-height:18px;font-size:11px">Performance</div>
<div class="a" style="left:928px;top:233px;width:70px;height:19px;border:1px solid #d9d9d9;background:#f0f0f0;text-align:center;line-height:18px;font-size:11px">Threads</div>
<div class="a" style="left:997px;top:233px;width:61px;height:19px;border:1px solid #d9d9d9;background:#f0f0f0;text-align:center;line-height:18px;font-size:11px">Token</div>
<div class="a" style="left:1057px;top:233px;width:67px;height:19px;border:1px solid #d9d9d9;background:#f0f0f0;text-align:center;line-height:18px;font-size:11px">Modules</div>
<div class="a" style="left:711px;top:270px;width:179px;height:97px;border:1px solid #dcdcdc"></div>
<div class="dl" style="left:717px;top:264px;background:#fff;padding:0 2px">CPU</div>
<div class="dl" style="left:720px;top:281px">Priority</div>
<div class="dl rt" style="left:680px;top:281px;width:200px">8</div>
<div class="dl" style="left:720px;top:297px">Cycles</div>
<div class="dl rt" style="left:680px;top:297px;width:200px">9 540 882 020 294</div>
<div class="dl" style="left:720px;top:313px">Kernel time</div>
<div class="dl rt" style="left:680px;top:313px;width:200px">00:00:01.265</div>
<div class="dl" style="left:720px;top:329px">User time</div>
<div class="dl rt" style="left:680px;top:329px;width:200px">00:47:07.328</div>
<div class="dl" style="left:720px;top:346px">Total time</div>
<div class="dl rt" style="left:680px;top:346px;width:200px">00:47:08.593</div>
<div class="a" style="left:711px;top:379px;width:180px;height:201px;border:1px solid #dcdcdc"></div>
<div class="dl" style="left:717px;top:373px;background:#fff;padding:0 2px">Memory</div>
<div class="dl" style="left:720px;top:390px">Private bytes</div>
<div class="dl rt" style="left:679px;top:390px;width:200px">2,3 GB</div>
<div class="dl" style="left:720px;top:407px">Peak private bytes</div>
<div class="dl rt" style="left:679px;top:407px;width:200px">2,3 GB</div>
<div class="dl" style="left:720px;top:423px">Virtual size</div>
<div class="dl rt" style="left:679px;top:423px;width:200px">2,01 TB</div>
<div class="dl" style="left:720px;top:440px">Peak virtual size</div>
<div class="dl rt" style="left:679px;top:440px;width:200px">2,01 TB</div>
<div class="dl" style="left:720px;top:456px">Page faults</div>
<div class="dl rt" style="left:679px;top:456px;width:200px">11 288</div>
<div class="dl" style="left:720px;top:474px">Working set</div>
<div class="dl rt" style="left:679px;top:474px;width:200px">20,78 MB</div>
<div class="dl" style="left:732px;top:491px">Private WS</div>
<div class="dl rt" style="left:679px;top:491px;width:200px">12,47 MB</div>
<div class="dl" style="left:732px;top:508px">Shareable WS</div>
<div class="dl rt" style="left:679px;top:508px;width:200px">Unknown</div>
<div class="dl" style="left:732px;top:524px">Shared WS</div>
<div class="dl rt" style="left:679px;top:524px;width:200px">Unknown</div>
<div class="dl" style="left:720px;top:542px">Peak working set</div>
<div class="dl rt" style="left:679px;top:542px;width:200px">21,38 MB</div>
<div class="dl" style="left:720px;top:559px">Page priority</div>
<div class="dl rt" style="left:679px;top:559px;width:200px">Unknown</div>
<div class="a" style="left:897px;top:270px;width:183px;height:128px;border:1px solid #dcdcdc"></div>
<div class="dl" style="left:903px;top:264px;background:#fff;padding:0 2px">I/O</div>
<div class="dl" style="left:906px;top:281px">Reads</div>
<div class="dl rt" style="left:870px;top:281px;width:200px">0</div>
<div class="dl" style="left:906px;top:297px">Read bytes</div>
<div class="dl rt" style="left:870px;top:297px;width:200px">0</div>
<div class="dl" style="left:906px;top:313px">Writes</div>
<div class="dl rt" style="left:870px;top:313px;width:200px">0</div>
<div class="dl" style="left:906px;top:329px">Write bytes</div>
<div class="dl rt" style="left:870px;top:329px;width:200px">0</div>
<div class="dl" style="left:906px;top:346px">Other</div>
<div class="dl rt" style="left:870px;top:346px;width:200px">988</div>
<div class="dl" style="left:906px;top:362px">Other bytes</div>
<div class="dl rt" style="left:870px;top:362px;width:200px">5,23 kB</div>
<div class="dl" style="left:906px;top:378px">I/O priority</div>
<div class="dl rt" style="left:870px;top:378px;width:200px">Unknown</div>
<div class="a" style="left:897px;top:409px;width:183px;height:107px;border:1px solid #dcdcdc"></div>
<div class="dl" style="left:903px;top:403px;background:#fff;padding:0 2px">Other</div>
<div class="dl" style="left:906px;top:419px">Handles</div>
<div class="dl rt" style="left:870px;top:419px;width:200px">278</div>
<div class="dl" style="left:906px;top:435px">Peak handles</div>
<div class="dl rt" style="left:870px;top:435px;width:200px">Unknown</div>
<div class="dl" style="left:906px;top:451px">GDI handles</div>
<div class="dl rt" style="left:870px;top:451px;width:200px">Unknown</div>
<div class="dl" style="left:906px;top:468px">USER handles</div>
<div class="dl rt" style="left:870px;top:468px;width:200px">Unknown</div>
<div class="a" style="left:907px;top:486px;width:73px;height:21px;background:#e1e1e1;border:2px solid #1c6cb0;box-shadow:inset 0 0 0 1px #cfe6f8;text-align:center;line-height:19px;font-size:11px">Details</div>
<div class="a" style="left:1054px;top:718px;width:73px;height:21px;background:#e1e1e1;border:1px solid #adadad;text-align:center;line-height:21px;font-size:11px">Close</div>
</body></html>
